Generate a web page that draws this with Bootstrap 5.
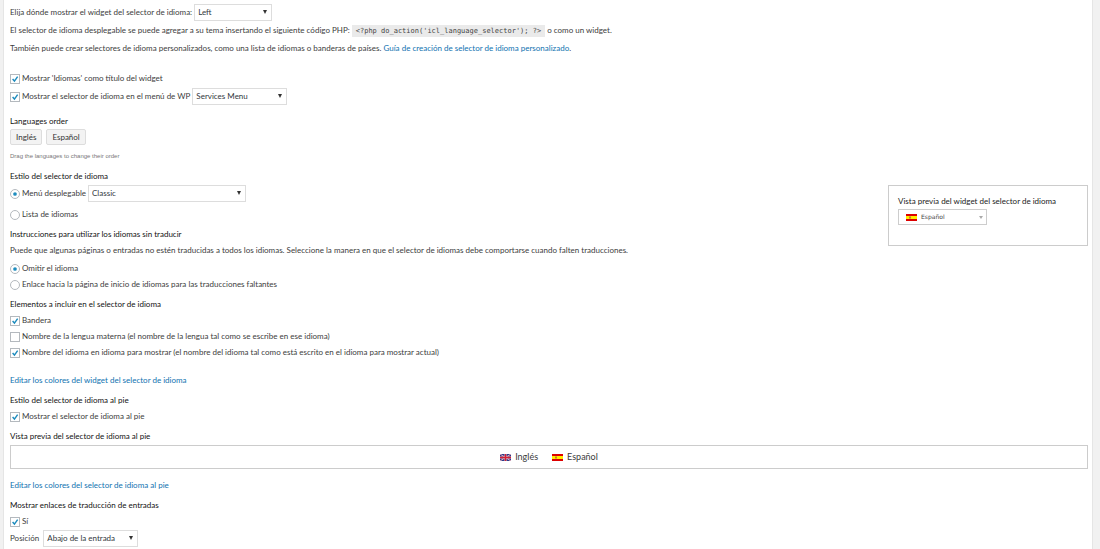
<!DOCTYPE html>
<html lang="es">
<head>
<meta charset="utf-8">
<meta name="viewport" content="width=device-width, initial-scale=1">
<title>Selector de idioma</title>
<link href="https://cdn.jsdelivr.net/npm/bootstrap@5.3.0/dist/css/bootstrap.min.css" rel="stylesheet">
<script src="https://cdn.jsdelivr.net/npm/bootstrap@5.3.0/dist/js/bootstrap.bundle.min.js" defer></script>
<style>
  body { font: 8px/16px Lato, "Noto Sans", sans-serif; color: #3c3c3c; background: #f1f1f1; }
  .panel { background: #fff; border: solid #e5e5e5; border-width: 0 1px; margin: 0 7px 0 3px; padding: 3px 4px 2px 6px; min-height: 100vh; }
  a { color: #0f72b0; text-decoration: none; }
  p { margin: 0; line-height: 18px; }
  h2 { font-size: 8px; font-weight: 400; line-height: 16px; margin: 4px 0 0; color: #111; }
  .line { display: flex; align-items: center; height: 16px; gap: 2px; }
  .line-tall { height: 18px; }
  .line .form-check-input { width: 10px; height: 10px; margin: 2px 0 0; flex: none; border: 1px solid #b4b9be; background-color: #fff; background-size: 100%; box-shadow: none; }
  .line .form-check-input[type=checkbox] { border-radius: 0; }
  .line .form-check-input[type=checkbox]:checked { background-image: url("data:image/svg+xml,%3Csvg xmlns='http://www.w3.org/2000/svg' viewBox='0 0 10 10'%3E%3Cpath d='M2 5l2.3 2.6L8.3 2' fill='none' stroke='%231e8cbe' stroke-width='1.8'/%3E%3C/svg%3E"); }
  .line .form-check-input[type=radio]:checked { background-image: url("data:image/svg+xml,%3Csvg xmlns='http://www.w3.org/2000/svg' viewBox='0 0 10 10'%3E%3Ccircle cx='5' cy='5' r='2.3' fill='%231e8cbe'/%3E%3C/svg%3E"); }
  .line .form-select { height: 17px; border: 1px solid #ddd; border-radius: 0; padding: 0 14px 0 3px; font-size: 8px; line-height: 15px; color: #32373c;
    background: #fff url("data:image/svg+xml,%3Csvg xmlns='http://www.w3.org/2000/svg' viewBox='0 0 4 4'%3E%3Cpath d='M0 0h4L2 4z' fill='%23333'/%3E%3C/svg%3E") no-repeat right 4px center / 4px 4px; }
  .line .pick-short { width: 78px; }
  .line .pick-mid { width: 95px; }
  .line .pick-long { width: 158px; }
  code { font: 7px/12px "DejaVu Sans Mono", monospace; color: #444; background: #eaeaea; padding: 2px 4px; }
  .lang-btn { height: 16px; padding: 0 5px; font-size: 8px; line-height: 14px; color: #333; background: #f3f3f3; border: 1px solid #ddd; border-radius: 2px; }
  .hint { font: 6px/16px "Liberation Sans", sans-serif; color: #777; margin-top: 3px; }
  .body-text { line-height: 16px; margin-bottom: 2px; }
  .preview { width: 200px; height: 61px; margin-top: 21px; padding: 7px 9px; border: 1px solid #ccc; color: #222; }
  .preview-btn { width: 89px; height: 16px; padding: 0 3px 0 7px; background: #fff; border: 1px solid #cdcdcd; font: 6px/14px "DejaVu Sans", sans-serif; color: #444; }
  .foot-preview { height: 24px; border: 1px solid #ccc; margin-top: 1px; gap: 14px; font-size: 9px; }
  .flag { width: 11px; height: 7px; flex: none; display: block; }
  .caret { width: 4px; height: 3px; }
  .gap-above { margin-top: 12px; }
</style>
</head>
<body>
<svg class="d-none">
  <symbol id="es" viewBox="0 0 11 7"><path fill="#d00" d="M0 0h11v7H0z"/><path fill="#fe0" d="M0 2h11v3H0z"/><path fill="#c73" d="M3 2.500h2v2H3z"/></symbol>
  <symbol id="gb" viewBox="0 0 11 7"><path fill="#2b3a8c" d="M0 0h11v7H0z"/><path stroke="#eab8c0" stroke-width="1" d="M0 0l11 7M11 0L0 7"/><path stroke="#f3c8cc" stroke-width="2" d="M5.500 0v7M0 3.500h11"/><path stroke="#d02035" stroke-width="1.400" d="M5.500 0v7M0 3.500h11"/></symbol>
</svg>
<main class="panel">
  <div class="line line-tall"><label for="side">Elija dónde mostrar el widget del selector de idioma:</label>
    <select id="side" class="form-select pick-short"><option>Left</option><option>Right</option></select></div>
  <p>El selector de idioma desplegable se puede agregar a su tema insertando el siguiente código PHP: <code>&lt;?php do_action('icl_language_selector'); ?&gt;</code> o como un widget.</p>
  <p>También puede crear selectores de idioma personalizados, como una lista de idiomas o banderas de países. <a href="#">Guía de creación de selector de idioma personalizado</a>.</p>

  <div class="line line-tall gap-above"><input class="form-check-input" type="checkbox" id="title" checked><label for="title">Mostrar 'Idiomas' como título del widget</label></div>
  <div class="line line-tall"><input class="form-check-input" type="checkbox" id="inmenu" checked><label for="inmenu">Mostrar el selector de idioma en el menú de WP</label>
    <select class="form-select pick-mid" aria-label="Menú de WP"><option>Services Menu</option></select></div>

  <h2 class="mt-2">Languages order</h2>
  <div class="d-flex gap-1"><button type="button" class="lang-btn">Inglés</button><button type="button" class="lang-btn">Español</button></div>
  <p class="hint">Drag the languages to change their order</p>

  <div class="d-flex">
    <section class="flex-grow-1">
      <h2>Estilo del selector de idioma</h2>
      <div class="line line-tall mb-1"><input class="form-check-input" type="radio" name="style" id="drop" checked><label for="drop">Menú desplegable</label>
        <select class="form-select pick-long" aria-label="Estilo del menú"><option>Classic</option></select></div>
      <div class="line"><input class="form-check-input" type="radio" name="style" id="list"><label for="list">Lista de idiomas</label></div>
      <h2>Instrucciones para utilizar los idiomas sin traducir</h2>
      <p class="body-text">Puede que algunas páginas o entradas no estén traducidas a todos los idiomas. Seleccione la manera en que el selector de idiomas debe comportarse cuando falten traducciones.</p>
    </section>
    <aside class="preview flex-shrink-0">
      <div>Vista previa del widget del selector de idioma</div>
      <button type="button" class="preview-btn d-flex align-items-center gap-1"><svg class="flag"><use href="#es"/></svg><span>Español</span><svg class="caret ms-auto" viewBox="0 0 4 3"><path fill="#aaa" d="M0 0h4L2 3z"/></svg></button>
    </aside>
  </div>

  <div class="line"><input class="form-check-input" type="radio" name="missing" id="skip" checked><label for="skip">Omitir el idioma</label></div>
  <div class="line"><input class="form-check-input" type="radio" name="missing" id="home"><label for="home">Enlace hacia la página de inicio de idiomas para las traducciones faltantes</label></div>

  <h2>Elementos a incluir en el selector de idioma</h2>
  <div class="line"><input class="form-check-input" type="checkbox" id="flag" checked><label for="flag">Bandera</label></div>
  <div class="line"><input class="form-check-input" type="checkbox" id="native"><label for="native">Nombre de la lengua materna (el nombre de la lengua tal como se escribe en ese idioma)</label></div>
  <div class="line"><input class="form-check-input" type="checkbox" id="shown" checked><label for="shown">Nombre del idioma en idioma para mostrar (el nombre del idioma tal como está escrito en el idioma para mostrar actual)</label></div>
  <div class="gap-above"><a href="#">Editar los colores del widget del selector de idioma</a></div>

  <h2>Estilo del selector de idioma al pie</h2>
  <div class="line"><input class="form-check-input" type="checkbox" id="foot" checked><label for="foot">Mostrar el selector de idioma al pie</label></div>

  <h2>Vista previa del selector de idioma al pie</h2>
  <div class="foot-preview d-flex justify-content-center align-items-center">
    <span class="d-flex align-items-center gap-1"><svg class="flag"><use href="#gb"/></svg>Inglés</span>
    <span class="d-flex align-items-center gap-1"><svg class="flag"><use href="#es"/></svg>Español</span>
  </div>
  <div class="mt-2"><a href="#">Editar los colores del selector de idioma al pie</a></div>

  <h2>Mostrar enlaces de traducción de entradas</h2>
  <div class="line"><input class="form-check-input" type="checkbox" id="yes" checked><label for="yes">Sí</label></div>
  <div class="line line-tall gap-1"><label for="pos">Posición</label>
    <select id="pos" class="form-select pick-mid"><option>Abajo de la entrada</option></select></div>
</main>
</body>
</html>
